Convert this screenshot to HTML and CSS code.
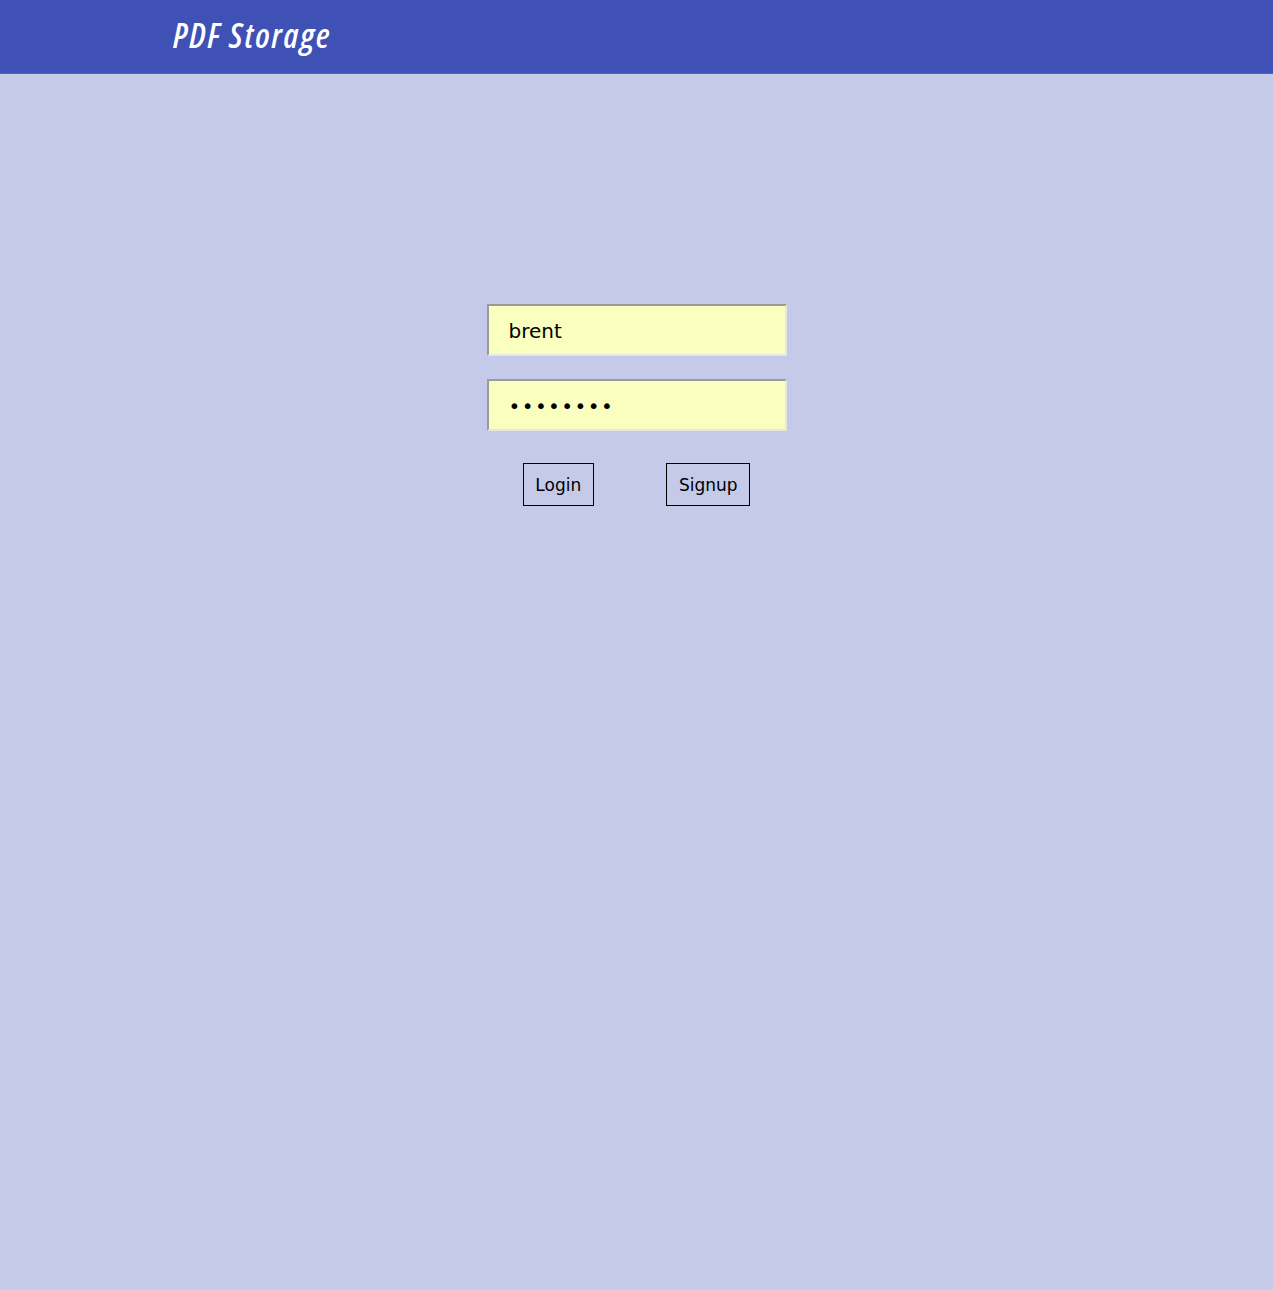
FILE: index.html
```html
<!DOCTYPE html>
<html>
<head>
<meta charset="utf-8">
<link rel="stylesheet" href="styles.css">
</head>
<body>
<header class="topbar">
  <h1 class="brand">PDF Storage</h1>
</header>
<main class="page">
  <form class="login-form">
    <input class="field" type="text" value="brent">
    <input class="field field-password" type="password" value="password">
    <div class="actions">
      <button type="button" class="btn">Login</button>
      <button type="button" class="btn">Signup</button>
    </div>
  </form>
</main>
</body>
</html>
```
FILE: styles.css
```css
html, body {
  margin: 0;
  padding: 0;
}
body {
  background: #c5cae9;
  font-family: "DejaVu Sans", sans-serif;
  min-height: 1290px;
}
.topbar {
  background: #3f51b5;
  height: 74px;
  border-bottom: 1px solid #5a64a0;
  box-sizing: border-box;
  display: flex;
  align-items: center;
  padding-left: 173px;
}
.brand {
  margin: 0;
  color: #fff;
  font-family: "Open Sans", sans-serif;
  font-style: italic;
  font-weight: 600;
  font-stretch: 75%;
  font-size: 34px;
  letter-spacing: 1.9px;
  position: relative;
  top: -2px;
}
.page {
  display: flex;
  justify-content: center;
  padding-top: 230px;
}
.login-form {
  width: 300px;
  display: flex;
  flex-direction: column;
}
.field {
  box-sizing: border-box;
  width: 300px;
  height: 52px;
  margin: 0 0 23px 0;
  padding: 1px 0 0 20px;
  border: 2px solid;
  border-color: #9a9a9a #e6e6e6 #e6e6e6 #9a9a9a;
  background: #faffc0;
  font-family: "DejaVu Sans", sans-serif;
  font-size: 20px;
  color: #000;
  outline: none;
}
.field-password {
  margin-bottom: 32px;
  letter-spacing: 1.4px;
}
.actions {
  display: flex;
  justify-content: space-around;
}
.btn {
  box-sizing: border-box;
  height: 43px;
  padding: 0 11.5px;
  border: 1px solid #000;
  border-radius: 0;
  background: transparent;
  font-family: "DejaVu Sans", sans-serif;
  font-size: 17px;
  color: #000;
}
```
